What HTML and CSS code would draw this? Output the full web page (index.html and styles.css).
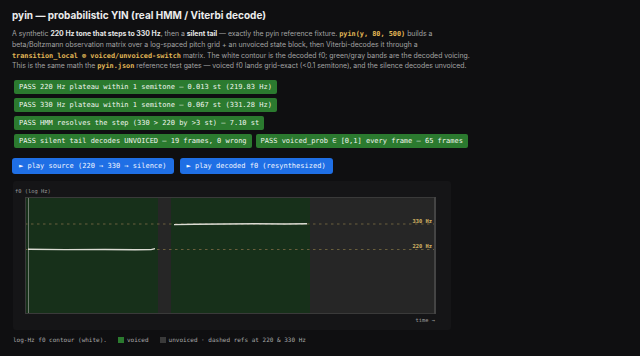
FILE: index.html
```html
<!DOCTYPE html>
<html lang="en">
<head>
<meta charset="utf-8">
<title>pyin — probabilistic YIN</title>
<link rel="stylesheet" href="styles.css">
</head>
<body>
<main class="page">
  <h1 class="title">pyin — probabilistic YIN (real HMM / Viterbi decode)</h1>
  <p class="lead">A synthetic <b>220 Hz tone that steps to 330 Hz</b>, then a <b>silent tail</b> — exactly the pyin reference fixture. <code>pyin(y, 80, 500)</code> builds a beta/Boltzmann observation matrix over a log-spaced pitch grid + an unvoiced state block, then Viterbi-decodes it through a <code>transition_local ⊗ voiced/unvoiced-switch</code> matrix. The white contour is the decoded f0; green/gray bands are the decoded voicing. This is the same math the <code>pyin.json</code> reference test gates — voiced f0 lands grid-exact (&lt;0.1 semitone), and the silence decodes unvoiced.</p>

  <div class="checks">
    <span class="badge">PASS 220 Hz plateau within 1 semitone — 0.013 st (219.83 Hz)</span>
    <span class="badge">PASS 330 Hz plateau within 1 semitone — 0.067 st (331.28 Hz)</span>
    <span class="badge">PASS HMM resolves the step (330 &gt; 220 by &gt;3 st) — 7.10 st</span>
    <span class="badge">PASS silent tail decodes UNVOICED — 19 frames, 0 wrong</span>
    <span class="badge">PASS voiced_prob ∈ [0,1] every frame — 65 frames</span>
  </div>

  <div class="actions">
    <button class="btn">► play source (220 → 330 → silence)</button>
    <button class="btn">► play decoded f0 (resynthesized)</button>
  </div>

  <section class="chart">
    <div class="axis-label">f0 (log Hz)</div>
    <svg class="plot" width="411" height="117" viewBox="0 0 411 117">
      <rect x="0" y="0" width="411" height="117" fill="#262626"/>
      <rect x="0" y="0" width="133" height="117" fill="#17301a"/>
      <rect x="146" y="0" width="139" height="117" fill="#17301a"/>
      <line x1="3.5" y1="0" x2="3.5" y2="117" stroke="#6f7a6f" stroke-width="1"/>
      <line x1="0" y1="27" x2="409" y2="27" stroke="#6a5f3c" stroke-width="1" stroke-dasharray="2.5 3.5"/>
      <line x1="0" y1="52.5" x2="409" y2="52.5" stroke="#6a5f3c" stroke-width="1" stroke-dasharray="2.5 3.5"/>
      <polyline points="3,52.3 40,52.6 80,52.5 110,52.8 126,52.6 130,51.6" fill="none" stroke="#dcdcd4" stroke-width="1.4"/>
      <polyline points="149,27.6 170,27.2 200,27 230,26.8 260,27 282,26.8" fill="none" stroke="#dcdcd4" stroke-width="1.4"/>
      <text class="ref" x="407" y="25.5" text-anchor="end">330 Hz</text>
      <text class="ref" x="407" y="51" text-anchor="end">220 Hz</text>
      <rect x="0.5" y="0.5" width="410" height="116" fill="none" stroke="#3a3a3a" stroke-width="1"/>
      <line x1="410" y1="0" x2="410" y2="117" stroke="#444" stroke-width="2"/>
    </svg>
    <div class="time-label">time →</div>
  </section>

  <div class="legend">
    <span>log-Hz f0 contour (white).</span>
    <span class="sw sw-voiced"></span><span>voiced</span>
    <span class="sw sw-unvoiced"></span><span>unvoiced · dashed refs at 220 &amp; 330 Hz</span>
  </div>
</main>
</body>
</html>
```

FILE: styles.css
```css
html, body {
  margin: 0;
  padding: 0;
  background: #0f0f11;
}
body {
  font-family: Inter, "Noto Sans", "Liberation Sans", sans-serif;
  color: #a3a3a3;
}
.page {
  padding: 7px 12px 0 12px;
  max-width: 526px;
}
.title {
  margin: 0;
  font-size: 10px;
  line-height: 16px;
  font-weight: 700;
  color: #ececec;
}
.lead {
  margin: 6px 0 0 0;
  max-width: 466px;
  font-size: 6.9px;
  line-height: 10.8px;
  color: #a3a3a3;
}
.lead b {
  color: #e6e6e6;
  font-weight: 700;
}
.lead code {
  font-family: "DejaVu Sans Mono", "Liberation Mono", monospace;
  font-size: 6.85px;
  line-height: 10px;
  font-weight: 700;
  color: #e2b857;
}
.checks {
  margin-top: 8px;
  display: flex;
  flex-wrap: wrap;
  gap: 4px 4px;
  padding-left: 2px;
  max-width: 480px;
}
.badge {
  display: inline-block;
  background: #2b7a2f;
  color: #f0f5ee;
  font-family: "DejaVu Sans Mono", "Liberation Mono", monospace;
  font-size: 7px;
  line-height: 14px;
  padding: 0 5px;
  border-radius: 2px;
}
.actions {
  margin-top: 10px;
  display: flex;
  gap: 6px;
}
.btn {
  background: #1f6fe5;
  color: #f2f6ff;
  border: none;
  border-radius: 3px;
  font-family: "DejaVu Sans Mono", "Liberation Mono", monospace;
  font-size: 7px;
  line-height: 16px;
  padding: 0 7px;
  margin: 0;
}
.chart {
  margin-top: 7px;
  margin-left: 1px;
  width: 438px;
  box-sizing: border-box;
  background: #151517;
  padding: 5px 14px 5px 12px;
  border-radius: 3px;
}
.axis-label, .time-label {
  font-family: "DejaVu Sans Mono", "Liberation Mono", monospace;
  font-size: 5.4px;
  line-height: 10px;
  color: #9a9a9a;
}
.axis-label {
  margin-left: -10px;
  margin-bottom: 1px;
}
.plot {
  display: block;
}
.ref {
  font-family: "DejaVu Sans Mono", "Liberation Mono", monospace;
  font-size: 5.4px;
  font-weight: 700;
  fill: #d6b664;
}
.time-label {
  text-align: right;
  padding-right: 2px;
  margin-top: 1px;
}
.legend {
  margin-top: 5px;
  display: flex;
  align-items: center;
  gap: 3px;
  font-family: "DejaVu Sans Mono", "Liberation Mono", monospace;
  font-size: 6px;
  line-height: 10px;
  color: #a8a8a8;
  padding-left: 1px;
}
.sw {
  display: inline-block;
  width: 6px;
  height: 6px;
  margin-left: 8px;
}
.sw-voiced {
  background: #2b7a2f;
}
.sw-unvoiced {
  background: #3a3a3a;
}
```
